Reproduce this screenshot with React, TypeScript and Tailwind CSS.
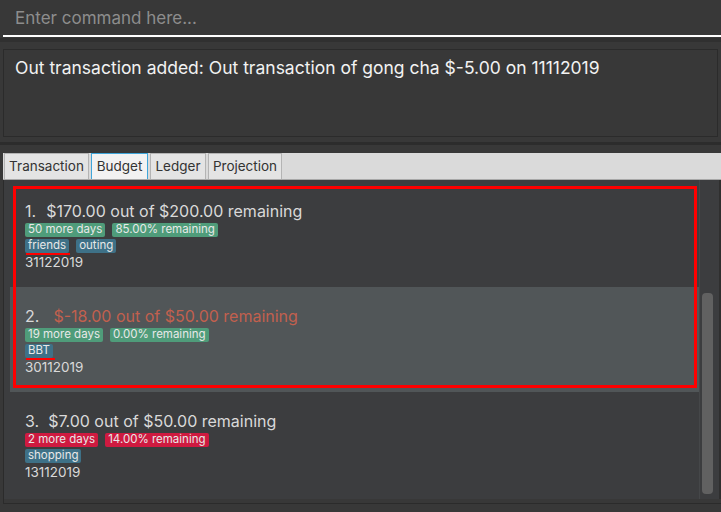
import React from "react";

const font = { fontFamily: "Inter, 'Noto Sans', sans-serif" };

function Tag({ text, color }: { text: string; color: string }) {
  return (
    <span className={`inline-flex h-[14px] items-center rounded-[2px] px-[3px] text-[11.5px] leading-none text-[#e8e8e8] ${color}`}>
      {text}
    </span>
  );
}

type Card = {
  num: string;
  gap: string;
  title: string;
  titleColor: string;
  tags: { text: string; color: string }[];
  cats: string[];
  date: string;
  selected?: boolean;
  underline?: string;
};

const cards: Card[] = [
  {
    num: "1.",
    gap: "ml-[10px]",
    title: "$170.00 out of $200.00 remaining",
    titleColor: "text-[#d9d9d9]",
    tags: [
      { text: "50 more days", color: "bg-[#4f9c7a]" },
      { text: "85.00% remaining", color: "bg-[#4f9c7a]" },
    ],
    cats: ["friends", "outing"],
    date: "31122019",
    underline: "w-[44px]",
  },
  {
    num: "2.",
    gap: "ml-[14px]",
    title: "$-18.00 out of $50.00 remaining",
    titleColor: "text-[#c2604e]",
    tags: [
      { text: "19 more days", color: "bg-[#4f9c7a]" },
      { text: "0.00% remaining", color: "bg-[#4f9c7a]" },
    ],
    cats: ["BBT"],
    date: "30112019",
    selected: true,
    underline: "w-[29px]",
  },
  {
    num: "3.",
    gap: "ml-[9px]",
    title: "$7.00 out of $50.00 remaining",
    titleColor: "text-[#d9d9d9]",
    tags: [
      { text: "2 more days", color: "bg-[#cf1a40]" },
      { text: "14.00% remaining", color: "bg-[#cf1a40]" },
    ],
    cats: ["shopping"],
    date: "13112019",
  },
];

export default function App() {
  return (
    <div className="flex h-[512px] w-[721px] flex-col overflow-hidden bg-[#383838]" style={font}>
      {/* command box */}
      <div className="h-[38px] shrink-0 pl-[3px]">
        <div className="flex h-[37px] items-center border-b-2 border-white pl-[12px] pt-[3px] text-[17px] text-[#8d8d8d]">
          Enter command here...
        </div>
      </div>
      <div className="h-[4px] shrink-0 bg-[#303030]" />
      <div className="h-[7px] shrink-0" />
      {/* result box */}
      <div className="mx-[3px] h-[88px] shrink-0 border border-[#2b2b2b] bg-[#383838] pl-[11px] pt-[5px] text-[17.5px] text-[#f2f2f2]">
        Out transaction added: Out transaction of gong cha $-5.00 on 11112019
      </div>
      <div className="h-[5px] shrink-0" />
      <div className="h-[3px] shrink-0 bg-[#2c2c2c]" />
      <div className="h-[8px] shrink-0" />
      {/* tab pane */}
      <div className="ml-[3px] flex min-h-0 flex-1 flex-col">
        <div className="flex h-[27px] shrink-0 items-end gap-[2px] border-b border-[#a8a8a8] bg-[#dadada] pl-px text-[13.5px] text-[#333]">
          <div className="flex h-[26px] w-[85px] items-center justify-center border border-b-0 border-[#b4b4b4] bg-[#e4e4e4]">Transaction</div>
          <div className="flex h-[26px] w-[57px] items-center justify-center border border-b-0 border-[#3fa6da] bg-[#f2f2f2]">Budget</div>
          <div className="flex h-[26px] w-[56px] items-center justify-center border border-b-0 border-[#b4b4b4] bg-[#e4e4e4]">Ledger</div>
          <div className="flex h-[26px] w-[74px] items-center justify-center border border-b-0 border-[#b4b4b4] bg-[#e4e4e4]">Projection</div>
        </div>
        <div className="mb-[8px] flex min-h-0 flex-1 border-b border-l border-[#2b2b2b] pb-[4px]">
          <div className="relative flex flex-1 flex-col bg-[#3c3d3f] pl-[6px] pt-[2px]">
            {cards.map((c, i) => (
              <div
                key={i}
                className={`relative flex h-[105px] shrink-0 flex-col pl-[15px] pt-[19px] ${c.selected ? "bg-[#515658]" : ""}`}
              >
                <div className="flex h-[20px] items-center text-[16px] leading-none">
                  <span className="text-[#d9d9d9]">{c.num}</span>
                  <span className={`${c.gap} ${c.titleColor}`}>{c.title}</span>
                </div>
                <div className="mt-[2px] flex gap-[7px]">
                  {c.tags.map((t) => (
                    <Tag key={t.text} text={t.text} color={t.color} />
                  ))}
                </div>
                <div className="relative mt-[2px] flex gap-[7px]">
                  {c.cats.map((t) => (
                    <Tag key={t} text={t} color="bg-[#3e7187]" />
                  ))}
                  {c.underline && (
                    <div className={`absolute left-px top-[14px] h-[2px] bg-[#ff0000] ${c.underline}`} />
                  )}
                </div>
                <div className="mt-[2px] text-[13.5px] leading-[15px] text-[#d9d9d9]">{c.date}</div>
              </div>
            ))}
            {/* red annotation frame */}
            <div className="pointer-events-none absolute left-[9px] top-[6px] h-[202px] w-[684px] border-[3px] border-[#ff0000]" />
          </div>
          {/* scrollbar */}
          <div className="flex w-[22px] shrink-0 border-l border-[#454749] bg-[#3c3d3f]">
            <div className="ml-[2px] mt-[113px] h-[201px] w-[11px] rounded-[4px] bg-[#616161]" />
            <div className="ml-auto w-[2px] bg-[#2f2f2f]" />
          </div>
        </div>
      </div>
    </div>
  );
}
